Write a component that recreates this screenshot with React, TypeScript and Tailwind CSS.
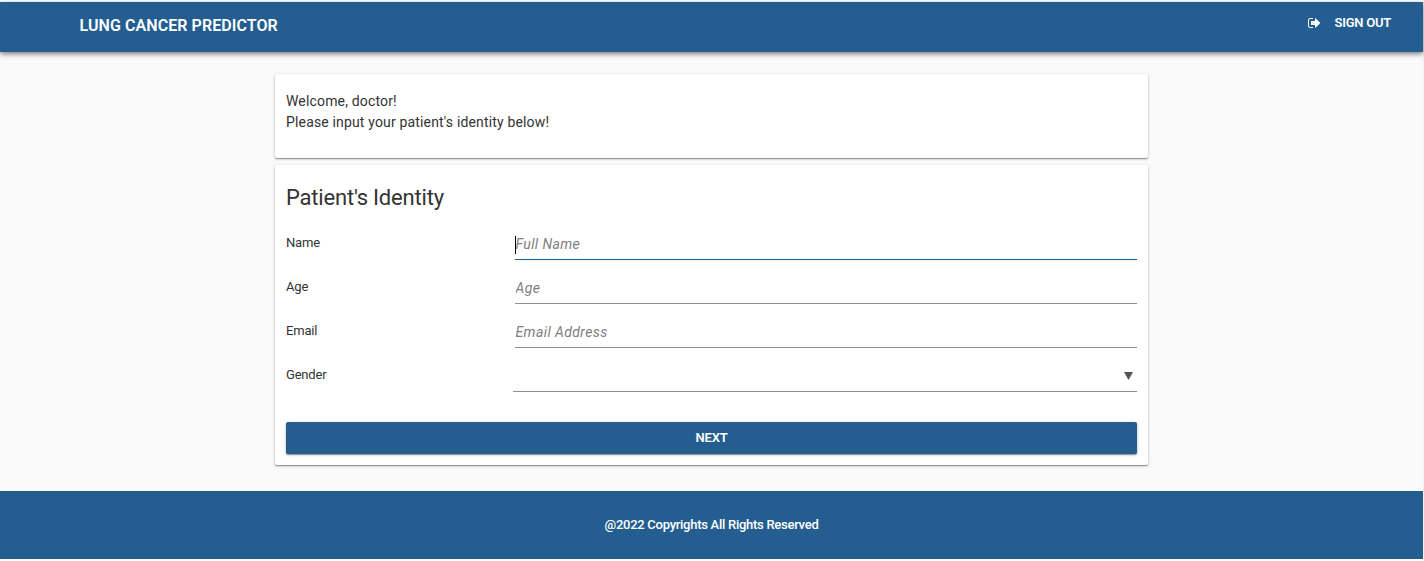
import React from 'react';

function SignOutIcon() {
  return (
    <svg viewBox="0 0 1664 1408" className="h-[11px] w-[13px]" fill="currentColor">
      <path d="M640 1312q0 4 1 20t.5 26.5-3 23.500-10 19.500-20.500 6.500H288q-119 0-203.500-84.500T0 1120V416q0-119 84.500-203.500T288 128h320q13 0 22.500 9.500T640 160q0 4 1 20t.5 26.500-3 23.500-10 19.500T608 256H288q-66 0-113 47t-47 113v704q0 66 47 113t113 47h312l11.500 1 11.500 3 8 5.500 7 9z M1568 768q0 26-19 45l-544 544q-19 19-45 19t-45-19-19-45v-288H448q-26 0-45-19t-19-45V576q0-26 19-45t45-19h448V224q0-26 19-45t45-19 45 19l544 544q19 19 19 45z" />
    </svg>
  );
}

const fields = [
  { label: 'Name', placeholder: 'Full Name', active: true },
  { label: 'Age', placeholder: 'Age', active: false },
  { label: 'Email', placeholder: 'Email Address', active: false },
];

const cardClass =
  'w-[873px] rounded-[2px] bg-white px-[11px] shadow-[0_1px_1px_rgba(0,0,0,0.3),0_1px_3px_rgba(0,0,0,0.25)]';

export default function App() {
  return (
    <div className="h-[561px] overflow-hidden bg-[#f1f1f1] pr-px font-['Roboto',sans-serif] text-[#333]">
      <div className="flex h-full flex-col bg-[#fafafa]">
        <div className="h-[2px] shrink-0 bg-white" />
        <header className="flex h-[50px] shrink-0 justify-between bg-[#245e91] pl-[79.5px] pr-[32px] text-white shadow-[0_2px_5px_rgba(0,0,0,0.5)]">
          <h1 className="text-[16px] font-semibold leading-[47px] tracking-[0.08px]">LUNG CANCER PREDICTOR</h1>
          <button className="flex h-[41px] items-center gap-[14px] text-[13px] font-semibold tracking-[-0.25px]">
            <SignOutIcon />
            <span>SIGN OUT</span>
          </button>
        </header>

        <main className="flex flex-col items-center pt-[22px]">
          <section className={`${cardClass} h-[84px] pt-[17px] text-[14px] leading-[21px] tracking-[0.16px]`}>
            <p>Welcome, doctor!</p>
            <p>Please input your patient's identity below!</p>
          </section>

          <section className={`${cardClass} mt-[7px] h-[300px]`}>
            <h2 className="pt-[17px] text-[22px] leading-[32px] tracking-[-0.2px]">Patient's Identity</h2>
            <form className="flex flex-col pt-[14px]">
              {fields.map((field) => (
                <div key={field.label} className="flex h-[44px]">
                  <label className="w-[229px] text-[13px] leading-[30px] tracking-[-0.2px]">{field.label}</label>
                  <div className="relative h-[32px] w-[622px]">
                    <input
                      placeholder={field.placeholder}
                      className={`h-[32px] w-full border-b pl-[0.5px] text-[14px] tracking-[0.4px] outline-none placeholder:italic placeholder:text-[#808080] ${field.active ? 'border-[#245e91]' : 'border-[#8f8f8f]'}`}
                    />
                    {field.active && <span className="absolute left-0 top-[8px] h-[18px] w-px bg-black" />}
                  </div>
                </div>
              ))}
              <div className="flex h-[44px]">
                <label className="w-[227px] text-[13px] leading-[30px] tracking-[-0.2px]">Gender</label>
                <div className="flex h-[32px] w-[624px] items-center justify-end border-b border-[#8f8f8f] pr-[4px] text-[#555]">
                  <svg viewBox="0 0 9 8" className="h-[8px] w-[9px]" fill="currentColor">
                    <path d="M0 0h9L4.500 8z" />
                  </svg>
                </div>
              </div>
              <button
                type="button"
                className="mt-[18px] h-[32px] w-[851px] rounded-[2px] bg-[#245e91] text-[13px] font-semibold tracking-[-0.2px] text-white shadow-[0_1px_1px_rgba(0,0,0,0.3),0_1px_3px_rgba(0,0,0,0.25)]"
              >
                NEXT
              </button>
            </form>
          </section>
        </main>

        <footer className="mt-[26px] h-[68px] shrink-0 bg-[#245e91] text-center text-[13px] font-medium leading-[68px] tracking-[-0.27px] text-white">
          @2022 Copyrights All Rights Reserved
        </footer>
      </div>
    </div>
  );
}
